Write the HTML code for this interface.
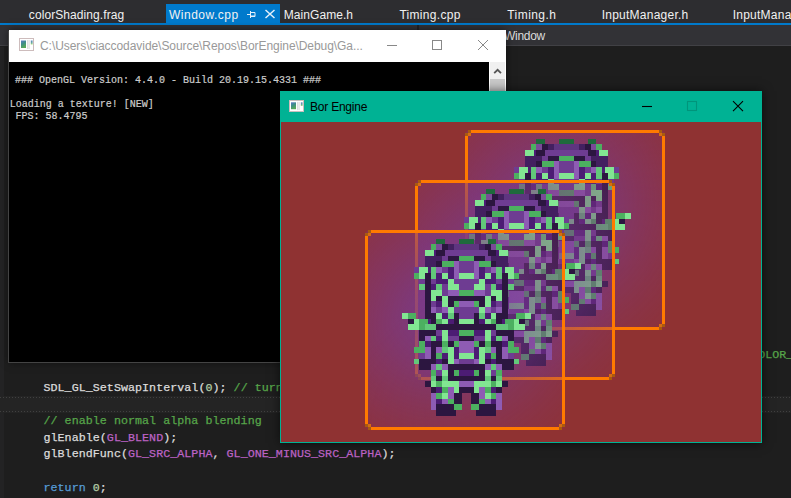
<!DOCTYPE html>
<html><head><meta charset="utf-8"><title>Bor Engine</title>
<style>
*{margin:0;padding:0;box-sizing:border-box}
html,body{width:791px;height:498px;overflow:hidden;background:#1e1e1e}
body{position:relative;font-family:"Liberation Sans",sans-serif;font-size:12px;color:#f1f1f1}
.abs{position:absolute}
#tabbar{left:0;top:0;width:791px;height:25px;background:#2d2d30}
#tabline{left:0;top:23px;width:791px;height:2px;background:#007acc}
#acttab{left:166px;top:4px;width:114px;height:20px;background:#007acc}
.tab{position:absolute;top:7px;height:16px;line-height:16px;white-space:pre;color:#f1f1f1}
#nav{left:0;top:25px;width:791px;height:21px;background:#323236;border-bottom:1px solid #414145}
#margin{left:0;top:47px;width:4px;height:451px;background:#232324}
.code{position:absolute;left:43.5px;white-space:pre;font-family:"Liberation Mono",monospace;font-size:11.67px;letter-spacing:.045px;line-height:16px;height:16px;color:#dcdcdc;-webkit-text-stroke:.25px}
.cm{color:#57a64a}.mc{color:#bd63c5}.kw{color:#569cd6}.nu{color:#b5cea8}
#curline{left:0;top:396px;width:791px;height:17px;background:#242424}
.dots{position:absolute;left:0;width:791px;height:1px;background:repeating-linear-gradient(90deg,#404040 0,#404040 1px,transparent 1px,transparent 3px)}
/* console */
#con{left:9px;top:30px;width:497px;height:332px;background:#fff;box-shadow:-1px 1px 0 #444,0 0 8px rgba(0,0,0,.55)}
#contitle{left:0;top:0;width:497px;height:32px;background:#fff}
#conbody{left:0;top:32px;width:480px;height:300px;background:#000}
#conscroll{left:481px;top:32px;width:15px;height:300px;background:#f0f0f0}
.ct{position:absolute;white-space:pre;font-family:"Liberation Mono",monospace;font-size:10px;line-height:12px;color:#cccccc;-webkit-text-stroke:.2px}
/* game */
#game{left:280px;top:91px;width:482px;height:352px;background:#00b294;box-shadow:0 0 10px rgba(0,0,0,.6)}
#gclient{left:1px;top:31px;width:480px;height:320px;background:#8f3232;overflow:hidden}
.quad{position:absolute;width:200px;height:200px}
.glow{position:absolute;left:0;top:0;width:200px;height:200px;background:radial-gradient(circle at 48% 47%,rgba(118,60,152,.87) 0,rgba(120,59,145,.8) 30%,rgba(124,57,132,.58) 60%,rgba(127,55,120,.38) 85%,rgba(128,55,115,.26) 100%);-webkit-mask-image:linear-gradient(135deg,#000 30%,rgba(0,0,0,.5) 100%);mask-image:linear-gradient(135deg,#000 30%,rgba(0,0,0,.5) 100%);clip-path:polygon(3px 0,197px 0,200px 3px,200px 197px,197px 200px,3px 200px,0 197px,0 3px)}
.spr{position:absolute;left:0;top:0;display:block;filter:blur(.45px)}
</style></head><body>
<div id="tabbar" class="abs"></div>
<div id="nav" class="abs"></div>
<div id="tabline" class="abs"></div>
<div id="acttab" class="abs"></div>
<span class="tab" style="left:28.8px;letter-spacing:.08px">colorShading.frag</span>
<span class="tab" style="left:169px;letter-spacing:.5px">Window.cpp</span>
<span class="tab" style="left:283.7px;letter-spacing:.07px">MainGame.h</span>
<span class="tab" style="left:399.4px;letter-spacing:.31px">Timing.cpp</span>
<span class="tab" style="left:507.3px;letter-spacing:.43px">Timing.h</span>
<span class="tab" style="left:601.7px;letter-spacing:.24px">InputManager.h</span>
<span class="tab" style="left:732.7px;letter-spacing:.24px">InputManager.cpp</span>
<span class="tab" style="left:504px;top:28px;letter-spacing:-.3px;color:#dcdcdc">Window</span>
<svg class="abs" style="left:245px;top:8px" width="34" height="12" viewBox="0 0 34 12" fill="none" stroke="#e4f0fa"><path d="M2 6.5h3.5M5.5 3v7M5.5 4.5h4.5v4h-4.5M5.5 8h4.5" stroke-width="1"/><path d="M20.5 2l9 8M29.5 2l-9 8" stroke-width="1.5"/></svg>
<div class="abs" style="left:417px;top:25px;width:2px;height:6px;background:#222225"></div>
<div id="margin" class="abs"></div>
<div id="curline" class="abs"><div class="dots" style="top:1px"></div><div class="dots" style="top:15px"></div></div>
<span class="code cm" style="left:758.2px;top:346.9px;letter-spacing:0">OLOR_BUFFER_BIT</span>
<span class="code" style="top:380.1px">SDL_GL_SetSwapInterval(<span class="nu">0</span>); <span class="cm">// turn off vsync</span></span>
<span class="code cm" style="top:413.2px">// enable normal alpha blending</span>
<span class="code" style="top:429.8px">glEnable(<span class="mc">GL_BLEND</span>);</span>
<span class="code" style="top:446.4px">glBlendFunc(<span class="mc">GL_SRC_ALPHA</span>, <span class="mc">GL_ONE_MINUS_SRC_ALPHA</span>);</span>
<span class="code" style="top:479.5px"><span class="kw">return</span> <span class="nu">0</span>;</span>

<div id="con" class="abs">
 <div id="contitle" class="abs"></div>
 <span class="abs" style="left:31px;top:8px;line-height:16px;white-space:pre;color:#999;letter-spacing:-.06px">C:\Users\ciaccodavide\Source\Repos\BorEngine\Debug\Ga...</span>
 <div id="conbody" class="abs"></div>
 <div id="conscroll" class="abs"></div>
<svg class="abs" style="left:10px;top:8px" width="15" height="13" viewBox="0 0 15 13"><defs><linearGradient id="i1a" x1="0" y1="0" x2="0.4" y2="1"><stop offset="0" stop-color="#5a78c8"/><stop offset=".5" stop-color="#3f8f86"/><stop offset="1" stop-color="#58a858"/></linearGradient><linearGradient id="i1b" x1="0" y1="0" x2="0" y2="1"><stop offset="0" stop-color="#5a88c0"/><stop offset=".6" stop-color="#6aa8a0"/><stop offset="1" stop-color="#a8e080"/></linearGradient></defs><rect x=".5" y=".5" width="14" height="12" fill="#fff" stroke="#cdbcbc"/><rect x="2" y="2.5" width="5" height="7.5" fill="url(#i1a)"/><rect x="8" y="2" width="1.6" height="9" fill="#dedede"/><rect x="10" y="2" width="1" height="9" fill="#e8e8e8"/><rect x="11.8" y="2.5" width="1.8" height="4" fill="url(#i1b)"/></svg>
 <svg class="abs" style="left:370px;top:5px" width="120" height="22" viewBox="0 0 120 22" fill="none" stroke="#888" stroke-width="1"><path d="M8 10.5h10"/><rect x="53.5" y="5.5" width="9" height="9"/><path d="M99 5l10 10M109 5l-10 10"/></svg>
 <svg class="abs" style="left:481px;top:32px" width="15" height="30" viewBox="0 0 15 30"><path d="M4.2 11.2L7.6 7.8L11 11.2" fill="none" stroke="#555" stroke-width="1.8"/><rect x="0" y="17" width="15" height="13" fill="#c9c9c9"/></svg>
 <span class="ct" style="left:6px;top:45px">### OpenGL Version: 4.4.0 - Build 20.19.15.4331 ###</span>
 <span class="ct" style="left:0.8px;top:69px">Loading a texture! [NEW]</span>
 <span class="ct" style="left:6.4px;top:81px">FPS: 58.4795</span>
</div>

<div id="game" class="abs">
 <span class="abs" style="left:30px;top:8px;line-height:16px;white-space:pre;color:#000;letter-spacing:-.22px">Bor Engine</span>
<svg class="abs" style="left:9px;top:9px" width="15" height="12" viewBox="0 0 15 13" preserveAspectRatio="none"><defs><linearGradient id="i2a" x1="0" y1="0" x2="0.4" y2="1"><stop offset="0" stop-color="#5a78c8"/><stop offset=".5" stop-color="#3f8f86"/><stop offset="1" stop-color="#58a858"/></linearGradient><linearGradient id="i2b" x1="0" y1="0" x2="0" y2="1"><stop offset="0" stop-color="#5a88c0"/><stop offset=".6" stop-color="#6aa8a0"/><stop offset="1" stop-color="#a8e080"/></linearGradient></defs><rect x=".5" y=".5" width="14" height="12" fill="#fff" stroke="#cdbcbc"/><rect x="2" y="2.5" width="5" height="7.5" fill="url(#i2a)"/><rect x="8" y="2" width="1.6" height="9" fill="#dedede"/><rect x="10" y="2" width="1" height="9" fill="#e8e8e8"/><rect x="11.8" y="2.5" width="1.8" height="4" fill="url(#i2b)"/></svg>
 <svg class="abs" style="left:355px;top:5px" width="120" height="22" viewBox="0 0 120 22" fill="none" stroke="#000" stroke-width="1.1"><path d="M7 10.5h10"/><rect x="52.5" y="5.5" width="9" height="9" stroke="#00957b"/><path d="M98 5.2l10 10M108 5.2l-10 10"/></svg>
 <div id="gclient" class="abs">
  <div class="quad" style="left:184px;top:8px"><div class="glow"></div><svg class="spr" width="200" height="200" viewBox="0 0 70 70" shape-rendering="crispEdges"><path fill="#ff7a00" d="M1 0h68v1h-68zM1 69h68v1h-68zM0 1h1v68h-1zM69 1h1v68h-1z"/><path fill="#a85a10" d="M1 0h1v1h-1zM0 1h1v1h-1zM68 0h1v1h-1zM69 1h1v1h-1zM0 68h1v1h-1zM1 69h1v1h-1zM69 68h1v1h-1zM68 69h1v1h-1z"/><path fill="#d86c10" d="M1 1h1v1h-1zM68 1h1v1h-1zM1 68h1v1h-1zM68 68h1v1h-1z"/><path fill="#82e692" d="M21 7h3v2h-3zM47 7h3v2h-3zM19 13h3v2h-3zM49 13h3v2h-3zM19 15h2v2h-2zM27 15h2v2h-2zM33 15h5v2h-5zM42 15h2v2h-2zM50 15h2v2h-2zM29 17h2v2h-2zM40 17h2v2h-2zM29 19h4v2h-4zM38 19h4v2h-4zM23 21h4v2h-4zM44 21h4v2h-4zM23 23h2v2h-2zM27 23h2v2h-2zM42 23h2v2h-2zM46 23h2v2h-2zM27 25h2v2h-2zM42 25h2v2h-2zM29 27h2v2h-2zM40 27h2v2h-2zM13 29h2v2h-2zM25 29h2v2h-2zM44 29h2v2h-2zM56 29h2v2h-2zM17 31h2v2h-2zM27 31h2v2h-2zM33 31h5v2h-5zM42 31h2v2h-2zM52 31h2v2h-2zM15 33h4v2h-4zM52 33h4v2h-4zM27 35h2v2h-2zM42 35h2v2h-2zM27 37h2v2h-2zM42 37h2v2h-2zM29 41h2v2h-2zM40 41h2v2h-2zM29 43h2v2h-2zM33 43h5v2h-5zM40 43h2v2h-2zM29 45h2v2h-2zM40 45h2v2h-2zM27 49h2v2h-2zM42 49h2v2h-2zM23 53h2v2h-2zM27 53h6v2h-6zM38 53h6v2h-6zM46 53h2v2h-2zM31 55h2v2h-2zM38 55h2v2h-2zM27 57h2v2h-2zM42 57h2v2h-2z"/><path fill="#62c87a" d="M23 13h2v2h-2zM46 13h2v2h-2zM23 15h2v2h-2zM46 15h2v2h-2zM19 19h2v2h-2zM25 19h2v2h-2zM44 19h2v2h-2zM50 19h2v2h-2zM29 29h2v2h-2zM40 29h2v2h-2zM21 33h4v2h-4zM46 33h4v2h-4zM23 37h2v2h-2zM46 37h2v2h-2zM27 41h2v2h-2zM42 41h2v2h-2zM17 45h2v2h-2zM52 45h2v2h-2zM25 47h2v2h-2zM44 47h2v2h-2zM23 51h2v2h-2zM27 51h2v2h-2zM42 51h2v2h-2zM46 51h2v2h-2z"/><path fill="#432060" d="M29 5h2v2h-2zM40 5h2v2h-2zM21 9h6v2h-6zM44 9h6v2h-6zM21 11h4v2h-4zM46 11h4v2h-4z"/><path fill="#5e3580" d="M31 5h9v2h-9z"/><path fill="#7a4a98" d="M25 5h2v2h-2zM44 5h2v2h-2z"/><path fill="#4cb060" d="M23 5h2v2h-2zM46 5h2v2h-2zM33 9h5v2h-5zM27 11h4v2h-4zM40 11h4v2h-4zM17 15h2v2h-2zM52 15h2v2h-2zM33 21h5v2h-5zM31 25h2v2h-2zM38 25h2v2h-2zM15 29h3v2h-3zM53 29h3v2h-3zM19 31h3v2h-3zM25 31h2v2h-2zM44 31h2v2h-2zM49 31h3v2h-3zM19 33h2v2h-2zM50 33h2v2h-2zM33 35h5v2h-5zM19 39h2v2h-2zM27 39h2v2h-2zM31 39h2v2h-2zM38 39h2v2h-2zM42 39h2v2h-2zM50 39h2v2h-2zM17 41h4v2h-4zM50 41h4v2h-4zM25 43h2v2h-2zM44 43h2v2h-2zM23 49h2v2h-2zM31 49h2v2h-2zM38 49h2v2h-2zM46 49h2v2h-2zM25 53h2v2h-2zM44 53h2v2h-2zM27 55h2v2h-2zM42 55h2v2h-2zM25 57h2v2h-2zM44 57h2v2h-2zM29 59h2v2h-2zM40 59h2v2h-2zM31 61h3v2h-3zM37 61h3v2h-3z"/><path fill="#1e6a3c" d="M25 3h3v2h-3zM33 3h5v2h-5zM43 3h3v2h-3z"/><path fill="#2c1640" d="M27 5h2v2h-2zM42 5h2v2h-2zM25 7h3v2h-3zM43 7h3v2h-3zM29 9h4v2h-4zM38 9h4v2h-4zM25 11h2v2h-2zM44 11h2v2h-2zM21 15h2v2h-2zM48 15h2v2h-2zM21 17h2v2h-2zM48 17h2v2h-2zM21 19h2v2h-2zM48 19h2v2h-2zM21 21h2v2h-2zM48 21h2v2h-2zM21 23h2v2h-2zM25 23h2v2h-2zM29 23h13v2h-13zM44 23h2v2h-2zM48 23h2v2h-2zM21 25h2v2h-2zM29 25h2v2h-2zM40 25h2v2h-2zM48 25h2v2h-2zM21 27h2v2h-2zM48 27h2v2h-2zM21 29h4v2h-4zM31 29h2v2h-2zM38 29h2v2h-2zM46 29h4v2h-4zM15 31h2v2h-2zM23 31h2v2h-2zM31 31h2v2h-2zM38 31h2v2h-2zM46 31h2v2h-2zM54 31h2v2h-2zM25 33h21v2h-21zM19 35h6v2h-6zM46 35h6v2h-6zM19 37h2v2h-2zM33 37h5v2h-5zM50 37h2v2h-2zM23 39h4v2h-4zM29 39h2v2h-2zM40 39h2v2h-2zM44 39h4v2h-4zM23 41h2v2h-2zM46 41h2v2h-2zM23 43h2v2h-2zM46 43h2v2h-2zM19 45h6v2h-6zM27 45h2v2h-2zM42 45h2v2h-2zM46 45h6v2h-6zM19 47h4v2h-4zM29 47h13v2h-13zM48 47h4v2h-4zM29 49h2v2h-2zM40 49h2v2h-2zM25 51h2v2h-2zM29 51h13v2h-13zM44 51h2v2h-2zM21 53h2v2h-2zM48 53h2v2h-2zM23 55h2v2h-2zM33 55h5v2h-5zM46 55h2v2h-2zM31 57h3v2h-3zM37 57h3v2h-3zM31 59h3v2h-3zM37 59h3v2h-3zM25 61h6v2h-6zM40 61h6v2h-6zM25 63h7v2h-7zM39 63h7v2h-7z"/><path fill="#4c1c74" d="M24 7h1v2h-1zM46 7h1v2h-1zM22 13h1v2h-1zM29 13h2v2h-2zM40 13h2v2h-2zM48 13h1v2h-1zM25 15h2v2h-2zM29 15h2v2h-2zM40 15h2v2h-2zM44 15h2v2h-2zM25 17h4v2h-4zM42 17h4v2h-4zM23 19h2v2h-2zM46 19h2v2h-2zM25 25h2v2h-2zM44 25h2v2h-2zM27 29h2v2h-2zM42 29h2v2h-2zM22 31h1v2h-1zM29 31h2v2h-2zM40 31h2v2h-2zM48 31h1v2h-1zM29 35h4v2h-4zM38 35h4v2h-4zM25 37h2v2h-2zM44 37h2v2h-2zM21 39h2v2h-2zM48 39h2v2h-2zM31 41h2v2h-2zM38 41h2v2h-2zM27 43h2v2h-2zM31 43h2v2h-2zM38 43h2v2h-2zM42 43h2v2h-2zM25 45h2v2h-2zM44 45h2v2h-2zM33 49h5v2h-5zM25 55h2v2h-2zM44 55h2v2h-2zM25 59h2v2h-2zM44 59h2v2h-2z"/><path fill="#6e3c92" d="M28 7h15v2h-15zM27 9h2v2h-2zM42 9h2v2h-2zM33 11h5v2h-5zM17 13h2v2h-2zM27 13h2v2h-2zM33 13h5v2h-5zM42 13h2v2h-2zM52 13h2v2h-2zM19 17h2v2h-2zM23 17h2v2h-2zM31 17h9v2h-9zM46 17h2v2h-2zM50 17h2v2h-2zM27 19h2v2h-2zM33 19h5v2h-5zM42 19h2v2h-2zM27 21h2v2h-2zM42 21h2v2h-2zM23 25h2v2h-2zM46 25h2v2h-2zM25 27h2v2h-2zM31 27h9v2h-9zM44 27h2v2h-2zM33 29h5v2h-5zM25 35h2v2h-2zM44 35h2v2h-2zM29 37h4v2h-4zM38 37h4v2h-4zM19 43h2v2h-2zM50 43h2v2h-2zM33 45h5v2h-5zM25 49h2v2h-2zM44 49h2v2h-2z"/><path fill="#8e5cb4" d="M31 11h2v2h-2zM38 11h2v2h-2zM25 13h2v2h-2zM31 13h2v2h-2zM38 13h2v2h-2zM44 13h2v2h-2zM31 15h2v2h-2zM38 15h2v2h-2zM29 21h4v2h-4zM38 21h4v2h-4zM33 25h5v2h-5zM23 27h2v2h-2zM27 27h2v2h-2zM42 27h2v2h-2zM46 27h2v2h-2zM21 37h2v2h-2zM48 37h2v2h-2zM33 39h5v2h-5zM21 41h2v2h-2zM25 41h2v2h-2zM33 41h5v2h-5zM44 41h2v2h-2zM48 41h2v2h-2zM21 43h2v2h-2zM48 43h2v2h-2zM31 45h2v2h-2zM38 45h2v2h-2zM23 47h2v2h-2zM27 47h2v2h-2zM42 47h2v2h-2zM46 47h2v2h-2zM33 53h5v2h-5zM29 55h2v2h-2zM40 55h2v2h-2zM23 57h2v2h-2zM29 57h2v2h-2zM40 57h2v2h-2zM46 57h2v2h-2zM23 59h2v2h-2zM27 59h2v2h-2zM42 59h2v2h-2zM46 59h2v2h-2zM23 61h2v2h-2zM46 61h2v2h-2z"/></svg></div>
  <div class="quad" style="left:134px;top:58px"><div class="glow"></div><svg class="spr" width="200" height="200" viewBox="0 0 70 70" shape-rendering="crispEdges"><path fill="#ff7a00" d="M1 0h68v1h-68zM1 69h68v1h-68zM0 1h1v68h-1zM69 1h1v68h-1z"/><path fill="#a85a10" d="M1 0h1v1h-1zM0 1h1v1h-1zM68 0h1v1h-1zM69 1h1v1h-1zM0 68h1v1h-1zM1 69h1v1h-1zM69 68h1v1h-1zM68 69h1v1h-1z"/><path fill="#d86c10" d="M1 1h1v1h-1zM68 1h1v1h-1zM1 68h1v1h-1zM68 68h1v1h-1z"/><path fill="#82e692" d="M21 7h3v2h-3zM47 7h3v2h-3zM19 13h3v2h-3zM49 13h3v2h-3zM19 15h2v2h-2zM27 15h2v2h-2zM33 15h5v2h-5zM42 15h2v2h-2zM50 15h2v2h-2zM29 17h2v2h-2zM40 17h2v2h-2zM29 19h4v2h-4zM38 19h4v2h-4zM23 21h4v2h-4zM44 21h4v2h-4zM23 23h2v2h-2zM27 23h2v2h-2zM42 23h2v2h-2zM46 23h2v2h-2zM27 25h2v2h-2zM42 25h2v2h-2zM29 27h2v2h-2zM40 27h2v2h-2zM13 29h2v2h-2zM25 29h2v2h-2zM44 29h2v2h-2zM56 29h2v2h-2zM17 31h2v2h-2zM27 31h2v2h-2zM33 31h5v2h-5zM42 31h2v2h-2zM52 31h2v2h-2zM15 33h4v2h-4zM52 33h4v2h-4zM27 35h2v2h-2zM42 35h2v2h-2zM27 37h2v2h-2zM42 37h2v2h-2zM29 41h2v2h-2zM40 41h2v2h-2zM29 43h2v2h-2zM33 43h5v2h-5zM40 43h2v2h-2zM29 45h2v2h-2zM40 45h2v2h-2zM27 49h2v2h-2zM42 49h2v2h-2zM23 53h2v2h-2zM27 53h6v2h-6zM38 53h6v2h-6zM46 53h2v2h-2zM31 55h2v2h-2zM38 55h2v2h-2zM27 57h2v2h-2zM42 57h2v2h-2z"/><path fill="#62c87a" d="M23 13h2v2h-2zM46 13h2v2h-2zM23 15h2v2h-2zM46 15h2v2h-2zM19 19h2v2h-2zM25 19h2v2h-2zM44 19h2v2h-2zM50 19h2v2h-2zM29 29h2v2h-2zM40 29h2v2h-2zM21 33h4v2h-4zM46 33h4v2h-4zM23 37h2v2h-2zM46 37h2v2h-2zM27 41h2v2h-2zM42 41h2v2h-2zM17 45h2v2h-2zM52 45h2v2h-2zM25 47h2v2h-2zM44 47h2v2h-2zM23 51h2v2h-2zM27 51h2v2h-2zM42 51h2v2h-2zM46 51h2v2h-2z"/><path fill="#432060" d="M29 5h2v2h-2zM40 5h2v2h-2zM21 9h6v2h-6zM44 9h6v2h-6zM21 11h4v2h-4zM46 11h4v2h-4z"/><path fill="#5e3580" d="M31 5h9v2h-9z"/><path fill="#7a4a98" d="M25 5h2v2h-2zM44 5h2v2h-2z"/><path fill="#4cb060" d="M23 5h2v2h-2zM46 5h2v2h-2zM33 9h5v2h-5zM27 11h4v2h-4zM40 11h4v2h-4zM17 15h2v2h-2zM52 15h2v2h-2zM33 21h5v2h-5zM31 25h2v2h-2zM38 25h2v2h-2zM15 29h3v2h-3zM53 29h3v2h-3zM19 31h3v2h-3zM25 31h2v2h-2zM44 31h2v2h-2zM49 31h3v2h-3zM19 33h2v2h-2zM50 33h2v2h-2zM33 35h5v2h-5zM19 39h2v2h-2zM27 39h2v2h-2zM31 39h2v2h-2zM38 39h2v2h-2zM42 39h2v2h-2zM50 39h2v2h-2zM17 41h4v2h-4zM50 41h4v2h-4zM25 43h2v2h-2zM44 43h2v2h-2zM23 49h2v2h-2zM31 49h2v2h-2zM38 49h2v2h-2zM46 49h2v2h-2zM25 53h2v2h-2zM44 53h2v2h-2zM27 55h2v2h-2zM42 55h2v2h-2zM25 57h2v2h-2zM44 57h2v2h-2zM29 59h2v2h-2zM40 59h2v2h-2zM31 61h3v2h-3zM37 61h3v2h-3z"/><path fill="#1e6a3c" d="M25 3h3v2h-3zM33 3h5v2h-5zM43 3h3v2h-3z"/><path fill="#2c1640" d="M27 5h2v2h-2zM42 5h2v2h-2zM25 7h3v2h-3zM43 7h3v2h-3zM29 9h4v2h-4zM38 9h4v2h-4zM25 11h2v2h-2zM44 11h2v2h-2zM21 15h2v2h-2zM48 15h2v2h-2zM21 17h2v2h-2zM48 17h2v2h-2zM21 19h2v2h-2zM48 19h2v2h-2zM21 21h2v2h-2zM48 21h2v2h-2zM21 23h2v2h-2zM25 23h2v2h-2zM29 23h13v2h-13zM44 23h2v2h-2zM48 23h2v2h-2zM21 25h2v2h-2zM29 25h2v2h-2zM40 25h2v2h-2zM48 25h2v2h-2zM21 27h2v2h-2zM48 27h2v2h-2zM21 29h4v2h-4zM31 29h2v2h-2zM38 29h2v2h-2zM46 29h4v2h-4zM15 31h2v2h-2zM23 31h2v2h-2zM31 31h2v2h-2zM38 31h2v2h-2zM46 31h2v2h-2zM54 31h2v2h-2zM25 33h21v2h-21zM19 35h6v2h-6zM46 35h6v2h-6zM19 37h2v2h-2zM33 37h5v2h-5zM50 37h2v2h-2zM23 39h4v2h-4zM29 39h2v2h-2zM40 39h2v2h-2zM44 39h4v2h-4zM23 41h2v2h-2zM46 41h2v2h-2zM23 43h2v2h-2zM46 43h2v2h-2zM19 45h6v2h-6zM27 45h2v2h-2zM42 45h2v2h-2zM46 45h6v2h-6zM19 47h4v2h-4zM29 47h13v2h-13zM48 47h4v2h-4zM29 49h2v2h-2zM40 49h2v2h-2zM25 51h2v2h-2zM29 51h13v2h-13zM44 51h2v2h-2zM21 53h2v2h-2zM48 53h2v2h-2zM23 55h2v2h-2zM33 55h5v2h-5zM46 55h2v2h-2zM31 57h3v2h-3zM37 57h3v2h-3zM31 59h3v2h-3zM37 59h3v2h-3zM25 61h6v2h-6zM40 61h6v2h-6zM25 63h7v2h-7zM39 63h7v2h-7z"/><path fill="#4c1c74" d="M24 7h1v2h-1zM46 7h1v2h-1zM22 13h1v2h-1zM29 13h2v2h-2zM40 13h2v2h-2zM48 13h1v2h-1zM25 15h2v2h-2zM29 15h2v2h-2zM40 15h2v2h-2zM44 15h2v2h-2zM25 17h4v2h-4zM42 17h4v2h-4zM23 19h2v2h-2zM46 19h2v2h-2zM25 25h2v2h-2zM44 25h2v2h-2zM27 29h2v2h-2zM42 29h2v2h-2zM22 31h1v2h-1zM29 31h2v2h-2zM40 31h2v2h-2zM48 31h1v2h-1zM29 35h4v2h-4zM38 35h4v2h-4zM25 37h2v2h-2zM44 37h2v2h-2zM21 39h2v2h-2zM48 39h2v2h-2zM31 41h2v2h-2zM38 41h2v2h-2zM27 43h2v2h-2zM31 43h2v2h-2zM38 43h2v2h-2zM42 43h2v2h-2zM25 45h2v2h-2zM44 45h2v2h-2zM33 49h5v2h-5zM25 55h2v2h-2zM44 55h2v2h-2zM25 59h2v2h-2zM44 59h2v2h-2z"/><path fill="#6e3c92" d="M28 7h15v2h-15zM27 9h2v2h-2zM42 9h2v2h-2zM33 11h5v2h-5zM17 13h2v2h-2zM27 13h2v2h-2zM33 13h5v2h-5zM42 13h2v2h-2zM52 13h2v2h-2zM19 17h2v2h-2zM23 17h2v2h-2zM31 17h9v2h-9zM46 17h2v2h-2zM50 17h2v2h-2zM27 19h2v2h-2zM33 19h5v2h-5zM42 19h2v2h-2zM27 21h2v2h-2zM42 21h2v2h-2zM23 25h2v2h-2zM46 25h2v2h-2zM25 27h2v2h-2zM31 27h9v2h-9zM44 27h2v2h-2zM33 29h5v2h-5zM25 35h2v2h-2zM44 35h2v2h-2zM29 37h4v2h-4zM38 37h4v2h-4zM19 43h2v2h-2zM50 43h2v2h-2zM33 45h5v2h-5zM25 49h2v2h-2zM44 49h2v2h-2z"/><path fill="#8e5cb4" d="M31 11h2v2h-2zM38 11h2v2h-2zM25 13h2v2h-2zM31 13h2v2h-2zM38 13h2v2h-2zM44 13h2v2h-2zM31 15h2v2h-2zM38 15h2v2h-2zM29 21h4v2h-4zM38 21h4v2h-4zM33 25h5v2h-5zM23 27h2v2h-2zM27 27h2v2h-2zM42 27h2v2h-2zM46 27h2v2h-2zM21 37h2v2h-2zM48 37h2v2h-2zM33 39h5v2h-5zM21 41h2v2h-2zM25 41h2v2h-2zM33 41h5v2h-5zM44 41h2v2h-2zM48 41h2v2h-2zM21 43h2v2h-2zM48 43h2v2h-2zM31 45h2v2h-2zM38 45h2v2h-2zM23 47h2v2h-2zM27 47h2v2h-2zM42 47h2v2h-2zM46 47h2v2h-2zM33 53h5v2h-5zM29 55h2v2h-2zM40 55h2v2h-2zM23 57h2v2h-2zM29 57h2v2h-2zM40 57h2v2h-2zM46 57h2v2h-2zM23 59h2v2h-2zM27 59h2v2h-2zM42 59h2v2h-2zM46 59h2v2h-2zM23 61h2v2h-2zM46 61h2v2h-2z"/></svg></div>
  <div class="quad" style="left:84px;top:108px"><div class="glow"></div><svg class="spr" width="200" height="200" viewBox="0 0 70 70" shape-rendering="crispEdges"><path fill="#ff7a00" d="M1 0h68v1h-68zM1 69h68v1h-68zM0 1h1v68h-1zM69 1h1v68h-1z"/><path fill="#a85a10" d="M1 0h1v1h-1zM0 1h1v1h-1zM68 0h1v1h-1zM69 1h1v1h-1zM0 68h1v1h-1zM1 69h1v1h-1zM69 68h1v1h-1zM68 69h1v1h-1z"/><path fill="#d86c10" d="M1 1h1v1h-1zM68 1h1v1h-1zM1 68h1v1h-1zM68 68h1v1h-1z"/><path fill="#82e692" d="M21 7h3v2h-3zM47 7h3v2h-3zM19 13h3v2h-3zM49 13h3v2h-3zM19 15h2v2h-2zM27 15h2v2h-2zM33 15h5v2h-5zM42 15h2v2h-2zM50 15h2v2h-2zM29 17h2v2h-2zM40 17h2v2h-2zM29 19h4v2h-4zM38 19h4v2h-4zM23 21h4v2h-4zM44 21h4v2h-4zM23 23h2v2h-2zM27 23h2v2h-2zM42 23h2v2h-2zM46 23h2v2h-2zM27 25h2v2h-2zM42 25h2v2h-2zM29 27h2v2h-2zM40 27h2v2h-2zM13 29h2v2h-2zM25 29h2v2h-2zM44 29h2v2h-2zM56 29h2v2h-2zM17 31h2v2h-2zM27 31h2v2h-2zM33 31h5v2h-5zM42 31h2v2h-2zM52 31h2v2h-2zM15 33h4v2h-4zM52 33h4v2h-4zM27 35h2v2h-2zM42 35h2v2h-2zM27 37h2v2h-2zM42 37h2v2h-2zM29 41h2v2h-2zM40 41h2v2h-2zM29 43h2v2h-2zM33 43h5v2h-5zM40 43h2v2h-2zM29 45h2v2h-2zM40 45h2v2h-2zM27 49h2v2h-2zM42 49h2v2h-2zM23 53h2v2h-2zM27 53h6v2h-6zM38 53h6v2h-6zM46 53h2v2h-2zM31 55h2v2h-2zM38 55h2v2h-2zM27 57h2v2h-2zM42 57h2v2h-2z"/><path fill="#62c87a" d="M23 13h2v2h-2zM46 13h2v2h-2zM23 15h2v2h-2zM46 15h2v2h-2zM19 19h2v2h-2zM25 19h2v2h-2zM44 19h2v2h-2zM50 19h2v2h-2zM29 29h2v2h-2zM40 29h2v2h-2zM21 33h4v2h-4zM46 33h4v2h-4zM23 37h2v2h-2zM46 37h2v2h-2zM27 41h2v2h-2zM42 41h2v2h-2zM17 45h2v2h-2zM52 45h2v2h-2zM25 47h2v2h-2zM44 47h2v2h-2zM23 51h2v2h-2zM27 51h2v2h-2zM42 51h2v2h-2zM46 51h2v2h-2z"/><path fill="#432060" d="M29 5h2v2h-2zM40 5h2v2h-2zM21 9h6v2h-6zM44 9h6v2h-6zM21 11h4v2h-4zM46 11h4v2h-4z"/><path fill="#5e3580" d="M31 5h9v2h-9z"/><path fill="#7a4a98" d="M25 5h2v2h-2zM44 5h2v2h-2z"/><path fill="#4cb060" d="M23 5h2v2h-2zM46 5h2v2h-2zM33 9h5v2h-5zM27 11h4v2h-4zM40 11h4v2h-4zM17 15h2v2h-2zM52 15h2v2h-2zM33 21h5v2h-5zM31 25h2v2h-2zM38 25h2v2h-2zM15 29h3v2h-3zM53 29h3v2h-3zM19 31h3v2h-3zM25 31h2v2h-2zM44 31h2v2h-2zM49 31h3v2h-3zM19 33h2v2h-2zM50 33h2v2h-2zM33 35h5v2h-5zM19 39h2v2h-2zM27 39h2v2h-2zM31 39h2v2h-2zM38 39h2v2h-2zM42 39h2v2h-2zM50 39h2v2h-2zM17 41h4v2h-4zM50 41h4v2h-4zM25 43h2v2h-2zM44 43h2v2h-2zM23 49h2v2h-2zM31 49h2v2h-2zM38 49h2v2h-2zM46 49h2v2h-2zM25 53h2v2h-2zM44 53h2v2h-2zM27 55h2v2h-2zM42 55h2v2h-2zM25 57h2v2h-2zM44 57h2v2h-2zM29 59h2v2h-2zM40 59h2v2h-2zM31 61h3v2h-3zM37 61h3v2h-3z"/><path fill="#1e6a3c" d="M25 3h3v2h-3zM33 3h5v2h-5zM43 3h3v2h-3z"/><path fill="#2c1640" d="M27 5h2v2h-2zM42 5h2v2h-2zM25 7h3v2h-3zM43 7h3v2h-3zM29 9h4v2h-4zM38 9h4v2h-4zM25 11h2v2h-2zM44 11h2v2h-2zM21 15h2v2h-2zM48 15h2v2h-2zM21 17h2v2h-2zM48 17h2v2h-2zM21 19h2v2h-2zM48 19h2v2h-2zM21 21h2v2h-2zM48 21h2v2h-2zM21 23h2v2h-2zM25 23h2v2h-2zM29 23h13v2h-13zM44 23h2v2h-2zM48 23h2v2h-2zM21 25h2v2h-2zM29 25h2v2h-2zM40 25h2v2h-2zM48 25h2v2h-2zM21 27h2v2h-2zM48 27h2v2h-2zM21 29h4v2h-4zM31 29h2v2h-2zM38 29h2v2h-2zM46 29h4v2h-4zM15 31h2v2h-2zM23 31h2v2h-2zM31 31h2v2h-2zM38 31h2v2h-2zM46 31h2v2h-2zM54 31h2v2h-2zM25 33h21v2h-21zM19 35h6v2h-6zM46 35h6v2h-6zM19 37h2v2h-2zM33 37h5v2h-5zM50 37h2v2h-2zM23 39h4v2h-4zM29 39h2v2h-2zM40 39h2v2h-2zM44 39h4v2h-4zM23 41h2v2h-2zM46 41h2v2h-2zM23 43h2v2h-2zM46 43h2v2h-2zM19 45h6v2h-6zM27 45h2v2h-2zM42 45h2v2h-2zM46 45h6v2h-6zM19 47h4v2h-4zM29 47h13v2h-13zM48 47h4v2h-4zM29 49h2v2h-2zM40 49h2v2h-2zM25 51h2v2h-2zM29 51h13v2h-13zM44 51h2v2h-2zM21 53h2v2h-2zM48 53h2v2h-2zM23 55h2v2h-2zM33 55h5v2h-5zM46 55h2v2h-2zM31 57h3v2h-3zM37 57h3v2h-3zM31 59h3v2h-3zM37 59h3v2h-3zM25 61h6v2h-6zM40 61h6v2h-6zM25 63h7v2h-7zM39 63h7v2h-7z"/><path fill="#4c1c74" d="M24 7h1v2h-1zM46 7h1v2h-1zM22 13h1v2h-1zM29 13h2v2h-2zM40 13h2v2h-2zM48 13h1v2h-1zM25 15h2v2h-2zM29 15h2v2h-2zM40 15h2v2h-2zM44 15h2v2h-2zM25 17h4v2h-4zM42 17h4v2h-4zM23 19h2v2h-2zM46 19h2v2h-2zM25 25h2v2h-2zM44 25h2v2h-2zM27 29h2v2h-2zM42 29h2v2h-2zM22 31h1v2h-1zM29 31h2v2h-2zM40 31h2v2h-2zM48 31h1v2h-1zM29 35h4v2h-4zM38 35h4v2h-4zM25 37h2v2h-2zM44 37h2v2h-2zM21 39h2v2h-2zM48 39h2v2h-2zM31 41h2v2h-2zM38 41h2v2h-2zM27 43h2v2h-2zM31 43h2v2h-2zM38 43h2v2h-2zM42 43h2v2h-2zM25 45h2v2h-2zM44 45h2v2h-2zM33 49h5v2h-5zM25 55h2v2h-2zM44 55h2v2h-2zM25 59h2v2h-2zM44 59h2v2h-2z"/><path fill="#6e3c92" d="M28 7h15v2h-15zM27 9h2v2h-2zM42 9h2v2h-2zM33 11h5v2h-5zM17 13h2v2h-2zM27 13h2v2h-2zM33 13h5v2h-5zM42 13h2v2h-2zM52 13h2v2h-2zM19 17h2v2h-2zM23 17h2v2h-2zM31 17h9v2h-9zM46 17h2v2h-2zM50 17h2v2h-2zM27 19h2v2h-2zM33 19h5v2h-5zM42 19h2v2h-2zM27 21h2v2h-2zM42 21h2v2h-2zM23 25h2v2h-2zM46 25h2v2h-2zM25 27h2v2h-2zM31 27h9v2h-9zM44 27h2v2h-2zM33 29h5v2h-5zM25 35h2v2h-2zM44 35h2v2h-2zM29 37h4v2h-4zM38 37h4v2h-4zM19 43h2v2h-2zM50 43h2v2h-2zM33 45h5v2h-5zM25 49h2v2h-2zM44 49h2v2h-2z"/><path fill="#8e5cb4" d="M31 11h2v2h-2zM38 11h2v2h-2zM25 13h2v2h-2zM31 13h2v2h-2zM38 13h2v2h-2zM44 13h2v2h-2zM31 15h2v2h-2zM38 15h2v2h-2zM29 21h4v2h-4zM38 21h4v2h-4zM33 25h5v2h-5zM23 27h2v2h-2zM27 27h2v2h-2zM42 27h2v2h-2zM46 27h2v2h-2zM21 37h2v2h-2zM48 37h2v2h-2zM33 39h5v2h-5zM21 41h2v2h-2zM25 41h2v2h-2zM33 41h5v2h-5zM44 41h2v2h-2zM48 41h2v2h-2zM21 43h2v2h-2zM48 43h2v2h-2zM31 45h2v2h-2zM38 45h2v2h-2zM23 47h2v2h-2zM27 47h2v2h-2zM42 47h2v2h-2zM46 47h2v2h-2zM33 53h5v2h-5zM29 55h2v2h-2zM40 55h2v2h-2zM23 57h2v2h-2zM29 57h2v2h-2zM40 57h2v2h-2zM46 57h2v2h-2zM23 59h2v2h-2zM27 59h2v2h-2zM42 59h2v2h-2zM46 59h2v2h-2zM23 61h2v2h-2zM46 61h2v2h-2z"/></svg></div>
 </div>
</div>
</body></html>
